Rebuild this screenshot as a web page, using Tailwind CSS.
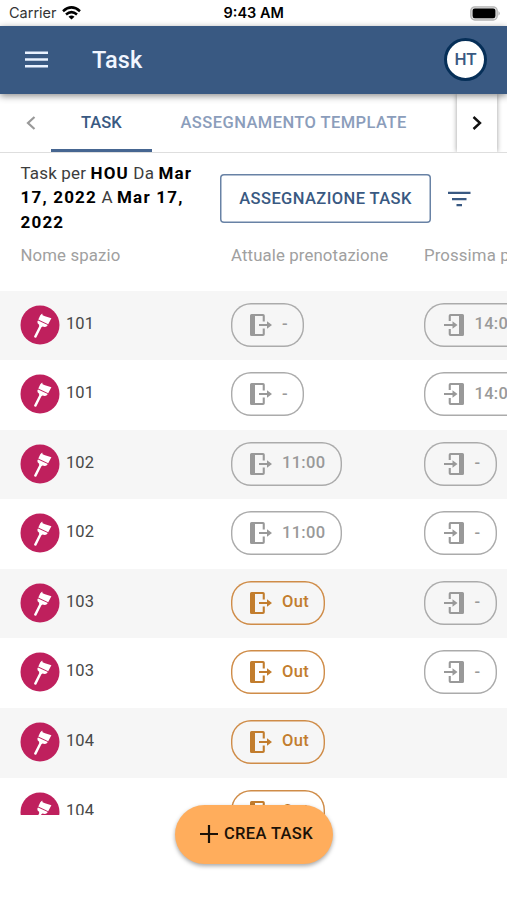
<!DOCTYPE html>
<html lang="it">
<head>
<meta charset="utf-8">
<title>Task</title>
<script src="https://cdn.jsdelivr.net/npm/@tailwindcss/browser@4"></script>
</head>
<body class="bg-white">
<svg class="hidden">
  <symbol id="out" viewBox="0 0 22 22"><path d="M1.500 0H13a1.800 1.800 0 0 1 1.800 1.800V7.500H12.700V2H5V20H12.700V14.500H14.800V20.200A1.800 1.800 0 0 1 13 22H1.500A1.500 1.500 0 0 1 0 20.500V1.500A1.500 1.500 0 0 1 1.500 0ZM9 10H17V7.200L22 11L17 14.800V12H9Z" fill="currentColor"/></symbol>
  <symbol id="in" viewBox="0 0 20 22"><path d="M18.500 0H6.500A1.800 1.800 0 0 0 4.700 1.800V7H6.800V2H15V20H6.800V15H4.700V20.200A1.800 1.800 0 0 0 6.500 22H18.500A1.500 1.500 0 0 0 20 20.500V1.500A1.500 1.500 0 0 0 18.500 0ZM0 10H8.500V7.200L13.500 11L8.500 14.800V12H0Z" fill="currentColor"/></symbol>
  <symbol id="brush" viewBox="0 0 40 40"><circle cx="20" cy="20" r="19.500" fill="#bf205d"/><g fill="#fff"><path d="M20.300 10.200L22.200 8.400L22.600 10.300L25 11.300L31.400 13.200L28.200 19.300L18.300 14.600Z"/><path d="M18 15.400L27.800 20L26.800 21.300Q25 22.500 22.600 21.500L21.400 22.300L16.300 32.500Q14.700 33.500 14 31.400L19.200 21.200L19.100 19.800Q17 18.400 17.400 16.600Z"/></g></symbol>
</svg>
<main class="w-[507px] h-[900px] overflow-hidden relative flex flex-col bg-white font-['Roboto',sans-serif]">
  <div class="h-[25.500px] shrink-0 flex items-center justify-between relative pl-[9px] pr-[6px] pt-[1px] font-['Inter',sans-serif] text-black">
    <div class="flex items-center gap-[5px] text-[14.500px] text-[#333]"><span>Carrier</span>
      <svg class="w-[19px] h-[14px]" viewBox="0 0 19 14" fill="none" stroke="#000" stroke-width="2.500"><path d="M1 5.200Q9.500-2.400 18 5.200M4 8.500Q9.500 3.700 15 8.500"/><path d="M6.500 10.800Q9.500 8.300 12.500 10.800L9.500 13.600Z" fill="#000" stroke="none"/></svg>
    </div>
    <span class="absolute left-[223.500px] text-[14.500px] font-semibold whitespace-nowrap">9:43 AM</span>
    <svg class="w-[31px] h-[15px]" viewBox="0 0 31 15"><rect x=".8" y=".8" width="26.400" height="13.200" rx="4" fill="#ddd" stroke="#b5b5b5" stroke-width="1.300"/><rect x="2.600" y="2.500" width="22.800" height="9.800" rx="2.200" fill="#000"/><path d="M28.500 5Q31 7.400 28.500 9.800Z" fill="#aaa"/></svg>
  </div>
  <header class="h-[68.500px] shrink-0 bg-[#395982] flex items-center pl-[25px] pr-[20px] relative z-10 shadow-[0_2px_7px_rgba(0,0,0,0.45)]">
    <svg class="w-[23px] h-[17px]" viewBox="0 0 23 17" fill="#e9f2ff"><path d="M0 .5H23V3H0ZM0 7.300H23V9.800H0ZM0 14H23V16.500H0Z"/></svg>
    <h1 class="ml-[44px] pt-[2px] text-[23.500px] font-medium text-[#f1f6ff] tracking-[0.150px]">Task</h1>
    <div class="ml-auto size-[43px] rounded-full border-[3px] border-[#062f58] bg-white flex items-center justify-center text-[17px] font-medium text-[#395982]">HT</div>
  </header>
  <nav class="h-[59px] shrink-0 border-b border-[#dedede] flex relative font-medium text-[16.500px]">
    <div class="w-[51px] flex items-center justify-end pr-[15px]"><svg class="w-[10px] h-[14px]" viewBox="0 0 10 14" fill="none" stroke="#999" stroke-width="2.200"><path d="M8.500 1L2 7L8.500 13"/></svg></div>
    <div class="w-[100.500px] border-b-[3px] border-[#466691] flex items-center justify-center text-[#395982] pt-[3px]"><span>TASK</span></div>
    <div class="w-[305px] flex items-center pl-[29px] text-[#8b9dbb] tracking-[0.430px]">ASSEGNAMENTO TEMPLATE</div>
    <div class="w-[40px] flex items-center justify-center shadow-[0_0_5px_rgba(0,0,0,0.4)] [clip-path:inset(0_-8px)]"><svg class="w-[10px] h-[14px]" viewBox="0 0 10 14" fill="none" stroke="#111" stroke-width="2.400"><path d="M1.500 1L8 7L1.500 13"/></svg></div>
  </nav>
  <section class="h-[90.500px] shrink-0 flex items-start pl-[20.500px] text-[#3d3d3d]">
    <p class="w-[199.500px] pt-[8px] text-[17px] leading-[24.400px] whitespace-nowrap tracking-[0.150px] [&_b]:text-black [&_b]:font-bold [&_b]:tracking-[1.200px]">Task per <b>HOU</b> Da <b>Mar<br>17, 2022</b> A <b>Mar 17,<br>2022</b></p>
    <button class="mt-[21px] pt-[1px] w-[211px] h-[49px] rounded-[4px] shadow-[inset_0_0_0_1.500px_#6882a5] text-[#395982] font-medium text-[16.500px] tracking-[0.400px] whitespace-nowrap">ASSEGNAZIONE TASK</button>
    <svg class="ml-[17px] mt-[38px] w-[23px] h-[16px]" viewBox="0 0 23 16" fill="#395982"><path d="M0 .7H22.500V3H0ZM4 7H18.500V9.300H4ZM8.500 12.900H14V15.200H8.500Z"/></svg>
  </section>
  <div class="h-[47px] shrink-0 grid grid-cols-[210.500px_193px_200px] pl-[20.500px] text-[16.800px] leading-[22px] tracking-[0.120px] text-[#a0a0a0] whitespace-nowrap"><span>Nome spazio</span><span>Attuale prenotazione</span><span>Prossima prenotazione</span></div>
  <div id="rows" class="h-[524px] shrink-0 overflow-hidden"></div>
  <button class="absolute left-[175px] top-[804.500px] w-[158px] h-[59px] rounded-full bg-[#ffad5c] shadow-[0_2px_4px_rgba(0,0,0,0.35)] flex items-center pl-[25px] gap-[6px] text-[#1c1208] font-medium text-[16.500px] tracking-[0.350px] whitespace-nowrap">
    <svg class="w-[18px] h-[18px]" viewBox="0 0 18 18" fill="none" stroke="#1c1208" stroke-width="2.200"><path d="M9 0V18M0 9H18"/></svg><span>CREA TASK</span></button>
</main>
<script>
const data = [["101","-","14:00"],["101","-","14:00"],["102","11:00","-"],["102","11:00","-"],["103","Out","-"],["103","Out","-"],["104","Out",""],["104","Out",""]];
const pill = (text, icon) => text ? `<div class="h-[44px] w-fit rounded-[20px] flex items-center font-medium text-[16.500px] tracking-[0.300px] ${text === "Out" ? "shadow-[inset_0_0_0_1.400px_#cf8c48] text-[#c27d2e]" : "shadow-[inset_0_0_0_1.400px_#ababab] text-[#999]"} ${icon === "in" ? "pl-[20px]" : "pl-[19px]"} pr-[16.500px]"><svg class="${icon === "in" ? "w-[20px] mr-[11px]" : "w-[22px] mr-[10.500px]"} h-[22px] shrink-0"><use href="#${icon}"/></svg><span class="-mt-[0.400px]">${text}</span></div>` : "<div></div>";
document.getElementById("rows").innerHTML = data.map(([n, a, p]) => `<div class="h-[69.600px] pt-[12px] pl-[20px] grid grid-cols-[210.500px_193px_200px] items-start odd:bg-[#f6f6f6]"><div class="flex items-start"><svg class="size-[40px] mt-[2px]"><use href="#brush"/></svg><span class="ml-[6px] mt-[9px] text-[16.500px] leading-[24px] tracking-[0.100px] text-[#484848]">${n}</span></div>${pill(a, "out")}${pill(p, "in")}</div>`).join("");
</script>
</body>
</html>
